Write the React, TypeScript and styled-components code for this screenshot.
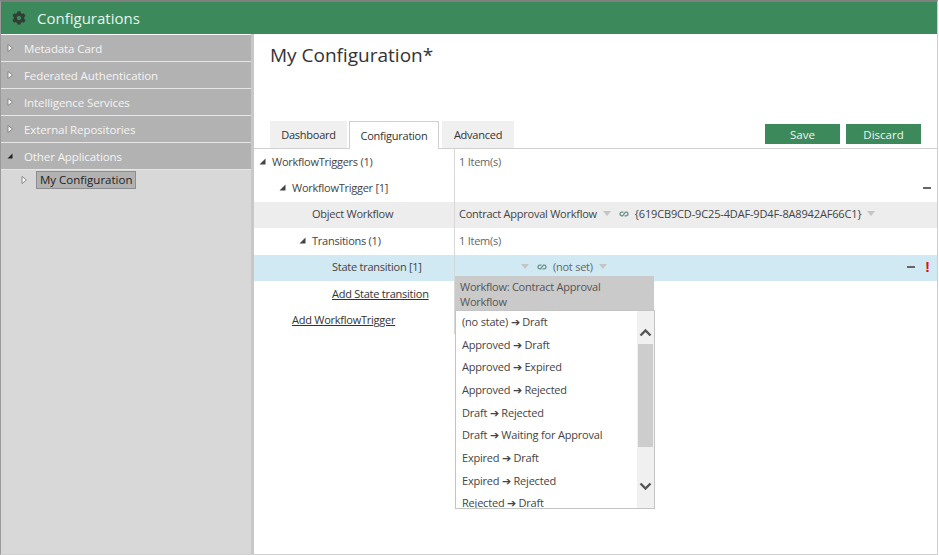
import React from 'react';
import styled, { createGlobalStyle } from 'styled-components';
import { FaCog } from 'react-icons/fa';

const GlobalStyle = createGlobalStyle`
  html, body {
    margin: 0;
    padding: 0;
    background: #fff;
  }
  body {
    font-family: "Open Sans", "Noto Sans", sans-serif;
  }
`;

const Window = styled.div`
  width: 938px;
  height: 555px;
  box-sizing: border-box;
  border: 1px solid #cfcfcf;
  border-top: 2px solid #7f7f7f;
  border-left-color: #9a9a9a;
  display: flex;
  flex-direction: column;
  overflow: hidden;
`;

const Header = styled.header`
  height: 32px;
  box-sizing: border-box;
  background: #3c8a5b;
  display: flex;
  align-items: center;
  padding: 0 0 1px 11px;
  gap: 11px;
  flex: none;
  color: #2f3f36;
`;

const HeaderTitle = styled.h1`
  margin: 0;
  font-size: 15px;
  font-weight: 400;
  color: #e8f3ec;
`;

const Body = styled.div`
  flex: 1;
  display: flex;
  min-height: 0;
`;

const Sidebar = styled.aside`
  width: 250px;
  background: #d8d8d8;
  border-top: 1px solid #fff;
  flex: none;
`;

const Splitter = styled.div`
  width: 3px;
  background: #c8c8c8;
  flex: none;
`;

const Section = styled.div`
  height: 26px;
  background: #b2b2b2;
  border-bottom: 1px solid #e6e6e6;
  display: flex;
  align-items: center;
  gap: 11px;
  padding-left: 6px;
  font-size: 11.5px;
  letter-spacing: -0.1px;
  color: #f4f4f4;
  &:last-of-type {
    border-bottom: none;
    height: 27px;
  }
`;

const Arrow = styled.svg`
  width: 6px;
  height: 8px;
  flex: none;
`;

const SubRow = styled.div`
  display: flex;
  align-items: center;
  gap: 9px;
  padding: 1px 0 0 20px;
`;

const Selected = styled.div`
  background: #b2b2b2;
  border: 1px solid #8e8e8e;
  font-size: 11.5px;
  color: #222;
  padding: 0 3px;
  line-height: 16px;
`;

const Main = styled.main`
  flex: 1;
  background: #fff;
  display: flex;
  flex-direction: column;
  min-width: 0;
  position: relative;
`;

const PageTitle = styled.h2`
  margin: 0;
  height: 87px;
  padding: 8px 0 0 16px;
  box-sizing: border-box;
  font-size: 19px;
  font-weight: 400;
  color: #333;
  flex: none;
`;

const TabBar = styled.div`
  height: 28px;
  box-sizing: border-box;
  display: flex;
  align-items: flex-start;
  padding-left: 16px;
  border-bottom: 1px solid #d0d0d0;
  gap: 2px;
  flex: none;
`;

const Tab = styled.div<{ $active?: boolean; $width: number }>`
  width: ${p => p.$width}px;
  height: ${p => (p.$active ? '28px' : '27px')};
  box-sizing: border-box;
  display: flex;
  align-items: center;
  justify-content: center;
  font-size: 11px;
  letter-spacing: -0.25px;
  color: #333;
  background: ${p => (p.$active ? '#fff' : '#f0f0f0')};
  border: ${p => (p.$active ? '1px solid #d0d0d0' : 'none')};
  border-bottom: none;
  margin-right: ${p => (p.$active ? '1px' : '0')};
`;

const Actions = styled.div`
  margin-left: auto;
  margin-right: 16px;
  margin-top: 3px;
  display: flex;
  gap: 6px;
`;

const ActionButton = styled.button`
  width: 75px;
  height: 20px;
  border: none;
  padding: 0;
  background: #3c8a5b;
  color: #eef6f1;
  font-family: inherit;
  font-size: 11.5px;
`;

const Rows = styled.div`
  display: flex;
  flex-direction: column;
`;

const Row = styled.div<{ $tone?: 'gray' | 'blue' }>`
  height: 26.4px;
  display: grid;
  grid-template-columns: 201px 1fr;
  background: ${p => (p.$tone === 'gray' ? '#ededed' : p.$tone === 'blue' ? '#d1e9f3' : 'transparent')};
  font-size: 11px;
  letter-spacing: -0.25px;
  color: #444;
`;

const NameCell = styled.div<{ $level: number }>`
  display: flex;
  align-items: center;
  gap: 6px;
  padding: 0 0 2px ${p => p.$level * 20 + 18}px;
  border-right: 1px solid #d8d8d8;
`;

const Expander = styled.svg`
  width: 7px;
  height: 7px;
  flex: none;
  margin-left: -13px;
`;

const ValueCell = styled.div`
  display: flex;
  align-items: center;
  padding: 0 0 2px 4px;
  gap: 6px;
  min-width: 0;
`;

const Muted = styled.span`
  color: #666;
`;

const Guid = styled.span`
  letter-spacing: -0.15px;
`;

const AddLink = styled.a`
  color: #333;
  text-decoration: underline;
`;

const Caret = styled.svg`
  width: 8px;
  height: 5px;
  flex: none;
`;

const LinkIcon = styled.svg`
  width: 10px;
  height: 6px;
  flex: none;
  margin-left: 2px;
`;

const EmptyValue = styled.span`
  width: 56px;
  flex: none;
`;

const RowActions = styled.div`
  margin-left: auto;
  margin-right: 6px;
  display: flex;
  align-items: center;
  gap: 10px;
`;

const Minus = styled.span`
  display: block;
  width: 8px;
  height: 2px;
  background: #666;
`;

const Alert = styled.span`
  width: 5px;
  margin-right: 1px;
  text-align: center;
  color: #e01010;
  font-family: "Liberation Sans", sans-serif;
  font-size: 15px;
  font-weight: 700;
  letter-spacing: 0;
  line-height: 1;
`;

const Dropdown = styled.div`
  position: absolute;
  left: 201px;
  top: 242px;
  width: 200px;
`;

const DropdownTitle = styled.div`
  background: #cacaca;
  color: #555;
  font-size: 11px;
  letter-spacing: -0.25px;
  line-height: 15px;
  padding: 3px 5px;
  width: 199px;
  height: 34px;
  box-sizing: border-box;
`;

const DropdownList = styled.div`
  height: 199px;
  box-sizing: border-box;
  border: 1px solid #c4c4c4;
  background: #fff;
  display: flex;
  overflow: hidden;
`;

const Options = styled.div`
  flex: 1;
  margin-top: -1px;
  padding-left: 6px;
`;

const Option = styled.div`
  height: 22.7px;
  display: flex;
  align-items: center;
  font-size: 11px;
  letter-spacing: -0.2px;
  color: #444;
  white-space: nowrap;
`;

const Scrollbar = styled.div`
  width: 17px;
  background: #f0f0f0;
  position: relative;
`;

const ScrollThumb = styled.div`
  position: absolute;
  left: 1px;
  top: 33px;
  width: 15px;
  height: 103px;
  background: #cdcdcd;
`;

const ScrollChevron = styled.svg<{ $top: number }>`
  position: absolute;
  left: 2px;
  top: ${p => p.$top}px;
  width: 13px;
  height: 9px;
`;

const LinkGlyph = () => (
  <LinkIcon viewBox="0 0 10 6" fill="none" stroke="#6a8f88" strokeWidth="1.3">
    <path d="M4.5 1.2 H2.8 a1.8 1.8 0 0 0 0 3.6 H3.6 L6.4 1.2 H7.2 a1.8 1.8 0 0 1 0 3.6 H5.5" />
  </LinkIcon>
);

const DownCaret = () => (
  <Caret viewBox="0 0 8 5">
    <path d="M0 0 H8 L4 5 Z" fill="#c4c4c4" />
  </Caret>
);

const Collapsed = () => (
  <Arrow viewBox="0 0 6 8">
    <path d="M1 .5 L5.5 4 L1 7.5 Z" fill="#f8f8f8" stroke="#777" strokeWidth=".8" />
  </Arrow>
);

const Open = () => (
  <Expander viewBox="0 0 7 7">
    <path d="M6.5 .5 V6.5 H.5 Z" fill="#444" />
  </Expander>
);

const sections = ['Metadata Card', 'Federated Authentication', 'Intelligence Services', 'External Repositories'];

const options = [
  '(no state) ➔ Draft',
  'Approved ➔ Draft',
  'Approved ➔ Expired',
  'Approved ➔ Rejected',
  'Draft ➔ Rejected',
  'Draft ➔ Waiting for Approval',
  'Expired ➔ Draft',
  'Expired ➔ Rejected',
  'Rejected ➔ Draft',
];

const App = () => {
  return (
    <>
      <GlobalStyle />
      <Window>
        <Header>
          <FaCog size={14} />
          <HeaderTitle>Configurations</HeaderTitle>
        </Header>
        <Body>
          <Sidebar>
            {sections.map(name => (
              <Section key={name}>
                <Collapsed />
                {name}
              </Section>
            ))}
            <Section>
              <Arrow viewBox="0 0 6 8">
                <path d="M5.5 1.5 V6.5 H.5 Z" fill="#222" />
              </Arrow>
              Other Applications
            </Section>
            <SubRow>
              <Collapsed />
              <Selected>My Configuration</Selected>
            </SubRow>
          </Sidebar>
          <Splitter />
          <Main>
            <PageTitle>My Configuration*</PageTitle>
            <TabBar>
              <Tab $width={77}>Dashboard</Tab>
              <Tab $width={90} $active>Configuration</Tab>
              <Tab $width={72}>Advanced</Tab>
              <Actions>
                <ActionButton>Save</ActionButton>
                <ActionButton>Discard</ActionButton>
              </Actions>
            </TabBar>
            <Rows>
              <Row>
                <NameCell $level={0}><Open />WorkflowTriggers (1)</NameCell>
                <ValueCell><Muted>1 Item(s)</Muted></ValueCell>
              </Row>
              <Row>
                <NameCell $level={1}><Open />WorkflowTrigger [1]</NameCell>
                <ValueCell>
                  <RowActions><Minus /></RowActions>
                </ValueCell>
              </Row>
              <Row $tone="gray">
                <NameCell $level={2}>Object Workflow</NameCell>
                <ValueCell>
                  Contract Approval Workflow
                  <DownCaret />
                  <LinkGlyph />
                  <Guid>{'{619CB9CD-9C25-4DAF-9D4F-8A8942AF66C1}'}</Guid>
                  <DownCaret />
                </ValueCell>
              </Row>
              <Row>
                <NameCell $level={2}><Open />Transitions (1)</NameCell>
                <ValueCell><Muted>1 Item(s)</Muted></ValueCell>
              </Row>
              <Row $tone="blue">
                <NameCell $level={3}>State transition [1]</NameCell>
                <ValueCell>
                  <EmptyValue />
                  <DownCaret />
                  <LinkGlyph />
                  <Muted>(not set)</Muted>
                  <DownCaret />
                  <RowActions><Minus /><Alert>!</Alert></RowActions>
                </ValueCell>
              </Row>
              <Row>
                <NameCell $level={3}><AddLink>Add State transition</AddLink></NameCell>
                <ValueCell />
              </Row>
              <Row>
                <NameCell $level={1}><AddLink>Add WorkflowTrigger</AddLink></NameCell>
                <ValueCell />
              </Row>
            </Rows>
            <Dropdown>
              <DropdownTitle>Workflow: Contract Approval Workflow</DropdownTitle>
              <DropdownList>
                <Options>
                  {options.map(o => <Option key={o}>{o}</Option>)}
                </Options>
                <Scrollbar>
                  <ScrollThumb />
                  <ScrollChevron $top={17} viewBox="0 0 13 9">
                    <path d="M1.5 7.5 L6.5 2.5 L11.5 7.5" fill="none" stroke="#555" strokeWidth="2.4" />
                  </ScrollChevron>
                  <ScrollChevron $top={171} viewBox="0 0 13 9">
                    <path d="M1.5 1.5 L6.5 6.5 L11.5 1.5" fill="none" stroke="#555" strokeWidth="2.4" />
                  </ScrollChevron>
                </Scrollbar>
              </DropdownList>
            </Dropdown>
          </Main>
        </Body>
      </Window>
    </>
  );
};

export default App;
